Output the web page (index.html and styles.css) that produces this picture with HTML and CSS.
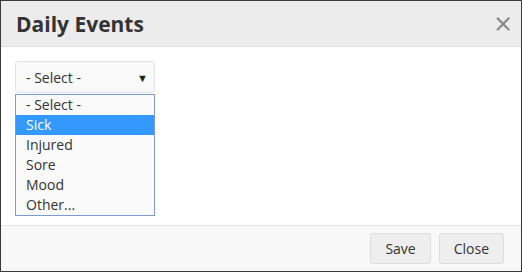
FILE: index.html
```html
<!DOCTYPE html>
<html lang="en">
<head>
  <meta charset="UTF-8" />
  <title>Daily Events</title>
  <link rel="stylesheet" href="styles.css">
</head>
<body>

  <div class="dialog">
    <div class="dialog-header">
      <span class="dialog-title">Daily Events</span>
      <span class="dialog-close">&times;</span>
    </div>

    <div class="dialog-body">
      <div class="picker">
        <div class="picker-box">
          <span>- Select -</span>
          <span class="picker-arrow">&#9660;</span>
        </div>
        <ul class="picker-list">
          <li>- Select -</li>
          <li class="selected">Sick</li>
          <li>Injured</li>
          <li>Sore</li>
          <li>Mood</li>
          <li>Other...</li>
        </ul>
      </div>
    </div>

    <div class="dialog-footer">
      <button class="btn">Save</button>
      <button class="btn">Close</button>
    </div>
  </div>

</body>
</html>
```

FILE: styles.css
```css
body {
  margin: 0;
  padding: 0;
  font-family: 'Open Sans', sans-serif;
  color: #333;
  background: #fff;
}

.dialog {
  width: 522px;
  height: 272px;
  box-sizing: border-box;
  border: 1px solid #3a3a3a;
  display: flex;
  flex-direction: column;
}

.dialog-header {
  height: 45px;
  background: #ececec;
  border-bottom: 1px solid #dcdce2;
  display: flex;
  align-items: center;
  justify-content: space-between;
  padding: 0 9px 0 15px;
}

.dialog-title {
  font-size: 21px;
  font-weight: bold;
  color: #333;
}

.dialog-close {
  font-size: 31px;
  color: #888;
  line-height: 1;
}

.dialog-body {
  flex: 1;
  padding: 14px 14px 0;
}

.picker {
  width: 140px;
}

.picker-box {
  height: 32px;
  box-sizing: border-box;
  border: 1px solid #e2e2e8;
  border-radius: 3px;
  background: #f9f9f9;
  display: flex;
  align-items: center;
  justify-content: space-between;
  padding: 0 6px 0 10px;
  font-size: 14px;
}

.picker-arrow {
  font-size: 11px;
  color: #222;
}

.picker-list {
  list-style: none;
  margin: 1px 0 0;
  padding: 0;
  border: 1px solid #7a9cd3;
  background: #fafafa;
  font-size: 14px;
}

.picker-list li {
  height: 20px;
  line-height: 20px;
  padding: 0 10px;
}

.picker-list li.selected {
  background: #3399ff;
  color: #fff;
}

.dialog-footer {
  height: 46px;
  box-sizing: border-box;
  border-top: 1px solid #e5e5e5;
  background: #f8f8f8;
  display: flex;
  justify-content: flex-end;
  align-items: center;
  gap: 8px;
  padding: 0 17px 0 0;
}

.btn {
  font-family: 'Open Sans', sans-serif;
  font-size: 14px;
  color: #333;
  background: #eee;
  border: 1px solid #ddd;
  border-radius: 3px;
  height: 31px;
  padding: 0 14px;
}
```
